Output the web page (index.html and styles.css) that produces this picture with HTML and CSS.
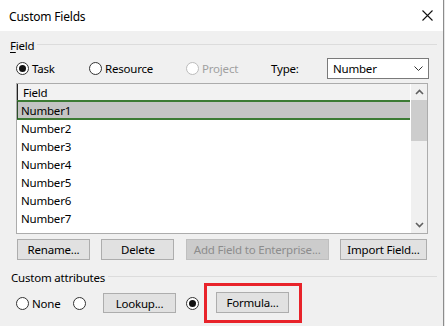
FILE: index.html
```html
<!DOCTYPE html>
<html lang="en">
<head>
  <meta charset="UTF-8">
  <link rel="stylesheet" href="styles.css">
  <title>Custom Fields</title>
</head>
<body>
  <div class="dialog">
    <div class="titlebar">
      <span class="title">Custom Fields</span>
      <svg class="close" width="11" height="11" viewBox="0 0 11 11">
        <path d="M0.5 0.5L10.5 10.5M10.5 0.5L0.5 10.5" stroke="#111" stroke-width="1.1" fill="none"/>
      </svg>
    </div>

    <div class="content">
      <div class="group-head">
        <span><u>F</u>ield</span>
        <i class="rule"></i>
      </div>

      <div class="scope-row">
        <label class="opt opt-task"><span class="radio checked"></span>Task</label>
        <label class="opt opt-res"><span class="radio"></span>Resource</label>
        <label class="opt opt-proj disabled"><span class="radio"></span>Project</label>
        <span class="type-label">Type:</span>
        <div class="select">
          <span>Number</span>
          <svg width="9" height="5" viewBox="0 0 9 5"><path d="M0.5 0.5L4.5 4.5L8.5 0.5" stroke="#333" fill="none"/></svg>
        </div>
      </div>

      <div class="listbox">
        <div class="list-main">
          <div class="list-head">Field</div>
          <div class="row selected">Number1</div>
          <div class="row">Number2</div>
          <div class="row">Number3</div>
          <div class="row">Number4</div>
          <div class="row">Number5</div>
          <div class="row">Number6</div>
          <div class="row">Number7</div>
          <div class="row">Number8</div>
        </div>
        <div class="scrollbar">
          <div class="sb-btn">
            <svg width="9" height="6" viewBox="0 0 9 6"><path d="M1 5L4.5 1.5L8 5" stroke="#606060" stroke-width="1.6" fill="none"/></svg>
          </div>
          <div class="sb-thumb"></div>
          <div class="sb-track"></div>
          <div class="sb-btn">
            <svg width="9" height="6" viewBox="0 0 9 6"><path d="M1 1L4.5 4.5L8 1" stroke="#606060" stroke-width="1.6" fill="none"/></svg>
          </div>
        </div>
      </div>

      <div class="actions">
        <button class="btn btn-rename">Rename...</button>
        <button class="btn btn-delete">Delete</button>
        <button class="btn btn-add" disabled>Add Field to Enterprise...</button>
        <button class="btn btn-import">Import Field...</button>
      </div>

      <div class="group-head attr-head">
        <span>Custom attributes</span>
        <i class="rule"></i>
      </div>

      <div class="attr-row">
        <label class="opt opt-none"><span class="radio"></span>None</label>
        <span class="radio radio-lookup"></span>
        <button class="btn btn-lookup">Lookup...</button>
        <span class="radio checked radio-formula"></span>
        <div class="highlight">
          <button class="btn btn-formula">Formula...</button>
        </div>
      </div>
    </div>
  </div>
</body>
</html>
```

FILE: styles.css
```css
*{
  margin: 0;
  padding: 0;
  box-sizing: border-box;
}
body{
  width: 445px;
  height: 326px;
  background: #e6e6e6;
  overflow: hidden;
  font-family: "Segoe UI", "Noto Sans", sans-serif;
  font-size: 11.5px;
  letter-spacing: -0.2px;
  color: #000;
}
.dialog{
  width: 444px;
  height: 326px;
  background: #f0f0f0;
  border-right: 1px solid #8c8c8c;
  overflow: hidden;
}
.titlebar{
  height: 31px;
  background: #fff;
  display: flex;
  justify-content: space-between;
  align-items: center;
  padding: 0 10px 0 9px;
}
.title{
  font-size: 12px;
  margin-top: 2px;
}
.close{
  display: block;
}

/* group headings with rule */
.group-head{
  display: flex;
  align-items: center;
  height: 14px;
  margin-top: 7px;
  padding: 0 6px 0 10px;
}
.group-head .rule{
  flex: 1;
  height: 1px;
  background: #dcdcdc;
  margin-left: 3px;
  margin-top: -1px;
}
.group-head u{
  text-decoration-thickness: 1px;
  text-underline-offset: 2px;
}
.attr-head{
  margin-top: 11px;
  height: 12px;
  padding-left: 11px;
}

/* radios */
.opt{
  display: flex;
  align-items: center;
  white-space: nowrap;
}
.radio{
  width: 13px;
  height: 13px;
  flex: none;
  border-radius: 50%;
  border: 1px solid #333;
  background: #fff;
  margin-right: 3px;
  display: flex;
  align-items: center;
  justify-content: center;
}
.radio.checked::after{
  content: "";
  width: 7px;
  height: 7px;
  border-radius: 50%;
  background: #111;
}
.disabled{
  color: #a0a0a0;
}
.disabled .radio{
  border-color: #bcbcbc;
}

.scope-row{
  display: flex;
  align-items: center;
  height: 20px;
  margin-top: 6px;
  padding-left: 16px;
}
.opt-task{ width: 73px; }
.opt-res{ width: 97px; }
.opt-proj{ width: 85px; }
.type-label{ width: 56px; }
.select{
  width: 102px;
  height: 21px;
  background: #fff;
  border: 1px solid #7a7a7a;
  display: flex;
  align-items: center;
  justify-content: space-between;
  padding: 0 5px 0 5px;
}

/* list */
.listbox{
  display: flex;
  width: 412px;
  height: 151px;
  margin: 5px 0 0 16px;
  border: 1px solid #acacac;
  background: #fff;
}
.list-main{
  width: 394px;
  overflow: hidden;
}
.list-head{
  height: 17px;
  line-height: 18px;
  background: #f2f2f2;
  border-left: 1px solid #222;
  padding-left: 5px;
}
.row{
  height: 18px;
  line-height: 19px;
  padding-left: 4px;
  white-space: nowrap;
}
.row.selected{
  background: #c4c4c4;
  border-left: 1px solid #2c4f28;
  padding-left: 3px;
  box-shadow: 0 -1px 0 #3b7a33, 0 1px 0 #3b7a33, inset 0 1px 0 #3b7a33, inset 0 -1px 0 #3b7a33;
  position: relative;
}
.scrollbar{
  width: 16px;
  margin-left: 1px;
  background: #f0f0f0;
  display: flex;
  flex-direction: column;
}
.sb-btn{
  height: 16px;
  display: flex;
  align-items: center;
  justify-content: center;
}
.sb-thumb{
  height: 41px;
  background: #cdcdcd;
}
.sb-track{
  flex: 1;
}

/* buttons */
.btn{
  font-family: inherit;
  font-size: 11.5px;
  letter-spacing: -0.2px;
  color: #000;
  height: 21px;
  background: #e1e1e1;
  border: 1px solid #adadad;
  display: flex;
  align-items: center;
  justify-content: center;
  white-space: nowrap;
}
.btn:disabled{
  background: #cccccc;
  border-color: #bfbfbf;
  color: #8c8c8c;
}
.actions{
  display: flex;
  justify-content: space-between;
  width: 410px;
  height: 21px;
  margin: 5px 0 0 17px;
}
.btn-rename{ width: 73px; }
.btn-delete{ width: 73px; }
.btn-add{ width: 143px; }
.btn-import{ width: 87px; }

.attr-row{
  display: flex;
  align-items: center;
  height: 40px;
  padding-left: 16px;
}
.opt-none{ width: 57px; }
.radio-lookup{ margin-right: 17px; }
.btn-lookup{ width: 73px; height: 20px; margin-right: 10px; }
.radio-formula{ margin-right: 5px; }
.highlight{
  border: 3px solid #e8232a;
  padding: 6px 10px 7px 9px;
}
.btn-formula{ width: 73px; }
```
